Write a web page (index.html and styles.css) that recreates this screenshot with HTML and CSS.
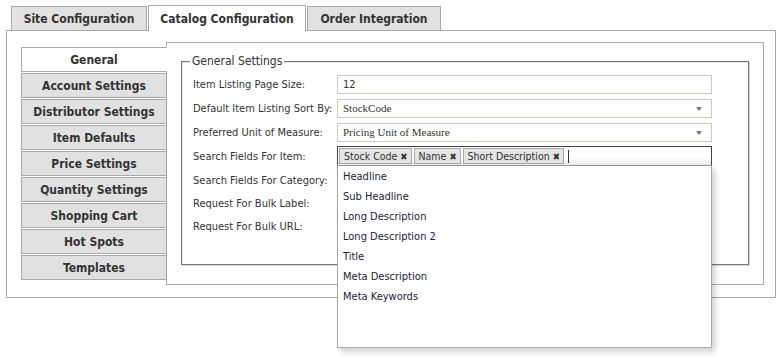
FILE: index.html
```html
<!DOCTYPE html>
<html>
<head>
<meta charset="utf-8">
<link rel="stylesheet" href="styles.css">
</head>
<body>
<div class="page">
  <div class="tabs">
    <div class="tab t-site">Site Configuration</div>
    <div class="tab t-catalog active">Catalog Configuration</div>
    <div class="tab t-order">Order Integration</div>
  </div>
  <div class="panel">
    <div class="vtabs">
      <div class="vtab active">General</div>
      <div class="vtab">Account Settings</div>
      <div class="vtab">Distributor Settings</div>
      <div class="vtab">Item Defaults</div>
      <div class="vtab">Price Settings</div>
      <div class="vtab">Quantity Settings</div>
      <div class="vtab">Shopping Cart</div>
      <div class="vtab">Hot Spots</div>
      <div class="vtab">Templates</div>
    </div>
    <div class="content">
      <div class="settings">
        <span class="legend">General Settings</span>
        <div class="row r1">
          <label>Item Listing Page Size:</label>
          <div class="input">12</div>
        </div>
        <div class="row r2">
          <label>Default Item Listing Sort By:</label>
          <div class="input select serif">StockCode<span class="arrow"></span></div>
        </div>
        <div class="row r3">
          <label>Preferred Unit of Measure:</label>
          <div class="input select serif">Pricing Unit of Measure<span class="arrow"></span></div>
        </div>
        <div class="row r4">
          <label>Search Fields For Item:</label>
          <div class="multi">
            <div class="choices">
              <span class="chip">Stock Code <b>✖</b></span>
              <span class="chip">Name <b>✖</b></span>
              <span class="chip">Short Description <b>✖</b></span>
              <span class="caret"></span>
            </div>
            <ul class="drop">
              <li>Headline</li>
              <li>Sub Headline</li>
              <li>Long Description</li>
              <li>Long Description 2</li>
              <li>Title</li>
              <li>Meta Description</li>
              <li>Meta Keywords</li>
            </ul>
          </div>
        </div>
        <div class="row r5">
          <label>Search Fields For Category:</label>
        </div>
        <div class="row r6">
          <label>Request For Bulk Label:</label>
        </div>
        <div class="row r7">
          <label>Request For Bulk URL:</label>
        </div>
      </div>
    </div>
  </div>
</div>
</body>
</html>
```

FILE: styles.css
```css
html, body {
  margin: 0;
  padding: 0;
  background: #fff;
}
body {
  font-family: "DejaVu Sans Condensed", "DejaVu Sans", sans-serif;
  color: #333;
}
.page {
  padding: 5px 4px 0 6px;
  width: 770px;
  min-height: 363px;
}
.tabs {
  display: flex;
  gap: 1px;
  padding-left: 5px;
  align-items: flex-start;
  position: relative;
  z-index: 2;
  height: 26px;
  margin-bottom: -1px;
}
.tab {
  box-sizing: border-box;
  margin-top: 1px;
  height: 25px;
  padding-top: 1px;
  line-height: 22px;
  text-align: center;
  border: 1px solid #aaa;
  background: #e1e1e1;
  font-weight: bold;
  font-size: 12px;
  color: #333;
}
.t-site { width: 136px; }
.t-catalog { width: 158px; }
.t-order { width: 134px; }
.tab.active {
  margin-top: 0;
  background: #fff;
  height: 27px;
  padding-top: 1px;
  line-height: 24px;
  border-bottom-color: #fff;
}
.panel {
  border: 1px solid #aaa;
  display: flex;
  padding: 11px 11px 12px 14px;
  box-sizing: border-box;
  height: 268px;
}
.vtabs {
  width: 146px;
  flex: none;
  margin-top: 5px;
  margin-right: -1px;
  position: relative;
  z-index: 4;
  display: flex;
  flex-direction: column;
  gap: 1px;
}
.vtab {
  height: 22px;
  padding-top: 1px;
  line-height: 22px;
  border: 1px solid #aaa;
  background: #e1e1e1;
  text-align: center;
  font-weight: bold;
  font-size: 12px;
  color: #333;
}
.vtab.active {
  background: #fff;
  border-right-color: #fff;
}
.content {
  flex: 1;
  border: 1px solid #aaa;
  position: relative;
  z-index: 3;
}
.settings {
  position: relative;
  margin: 18px 14px 0 14px;
  padding: 11px 10px 0 11px;
  border: 1px solid #7a7a7a;
  box-shadow: 1px 1px 0 #d4d4d4, inset 1px 1px 0 #e6e6e6;
  height: 204px;
  box-sizing: border-box;
  font-size: 11px;
  color: #333;
}
.legend {
  position: absolute;
  top: -8px;
  left: 8px;
  padding: 0 2px;
  background: #fff;
  font-size: 12px;
  line-height: 15px;
  color: #333;
}
.row {
  display: flex;
  align-items: center;
  height: 24px;
}
.r1 { height: 23px; }
.r5 { height: 25px; }
.r6 { height: 21px; }
.row label {
  width: 144px;
  flex: none;
  white-space: nowrap;
}
.input {
  box-sizing: border-box;
  width: 375px;
  height: 19px;
  border: 1px solid #ccc9bd;
  font-size: 11px;
  line-height: 17px;
  padding-left: 5px;
  position: relative;
  color: #333;
}
.serif {
  font-family: "Liberation Serif", serif;
  font-size: 11px;
}
.arrow {
  position: absolute;
  right: 9px;
  top: 7px;
  width: 0;
  height: 0;
  border-left: 3.5px solid transparent;
  border-right: 3.5px solid transparent;
  border-top: 4px solid #777;
}
.multi {
  position: relative;
  width: 375px;
}
.choices {
  box-sizing: border-box;
  height: 20px;
  border: 1px solid #444;
  display: flex;
  align-items: center;
  padding-left: 1px;
  gap: 2px;
  background: linear-gradient(to bottom, #fff 55%, #ececec 100%);
}
.chip {
  border: 1px solid #aaa;
  background: #e4e4e4;
  height: 16px;
  line-height: 15px;
  padding: 0 3px 0 4px;
  font-size: 10.5px;
  color: #333;
  box-sizing: border-box;
  white-space: nowrap;
}
.chip b {
  font-size: 9.5px;
  color: #333;
}
.caret {
  width: 1px;
  height: 13px;
  background: #333;
  margin-left: 2px;
}
.drop {
  position: absolute;
  left: 0;
  top: 19px;
  width: 375px;
  box-sizing: border-box;
  height: 183px;
  margin: 0;
  padding: 1px 0 0 0;
  list-style: none;
  background: #fff;
  border: 1px solid #aaa;
  border-top: 1px solid #999;
  box-shadow: 3px 4px 6px rgba(0, 0, 0, 0.18);
  z-index: 5;
}
.drop li {
  height: 20px;
  line-height: 20px;
  padding-left: 5px;
  font-size: 11px;
  color: #1c1c36;
}
```
